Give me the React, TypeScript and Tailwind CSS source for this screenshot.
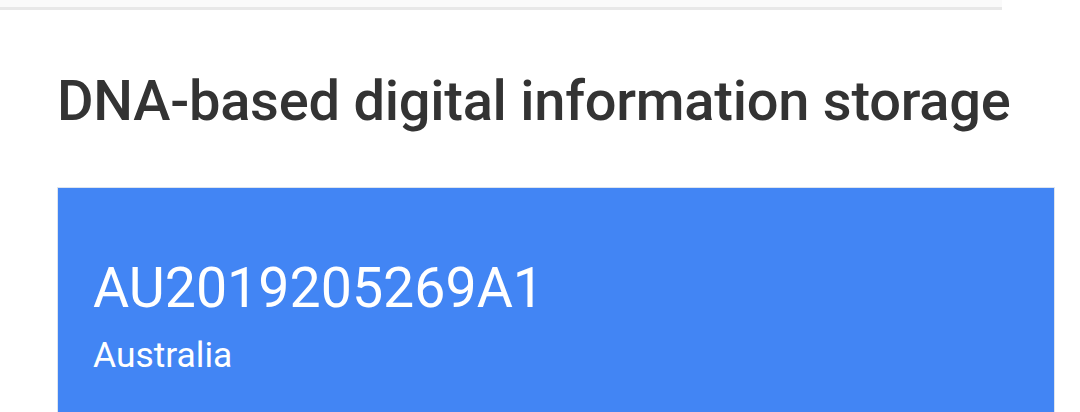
export default function App() {
  return (
    <div className="w-[1080px] h-[412px] overflow-hidden bg-white font-['Roboto',sans-serif]">
      <div className="w-[1002px] h-[10px] bg-[#fafafa] border-b-[3px] border-[#e8e8e8]" />
      <div className="pl-[57px] pr-[25px]">
        <h1 className="mt-[58px] text-[56px] leading-[66px] font-medium text-[#333333] tracking-[-0.25px]">
          DNA-based digital information storage
        </h1>
        <div className="mt-[53px] border border-[#dde4ee] bg-[#4285f4] pl-[35px] pt-[69px] pb-[60px] text-white">
          <div className="text-[55.5px] leading-[64px]">AU2019205269A1</div>
          <div className="mt-[14px] text-[35.4px] leading-[40px]">Australia</div>
        </div>
      </div>
    </div>
  );
}
